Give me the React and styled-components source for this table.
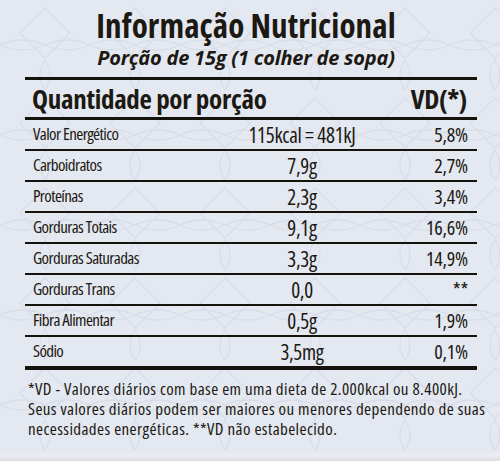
import React from "react"
import styled, { createGlobalStyle } from "styled-components"

const GlobalStyle = createGlobalStyle`
	html, body {
		margin: 0;
		padding: 0;
	}
	body {
		font-family: "Open Sans", "DejaVu Sans Condensed", sans-serif;
		font-stretch: 75%;
		color: #1c1812;
	}
`

const pattern = encodeURIComponent(
	`<svg xmlns='http://www.w3.org/2000/svg' width='90' height='90' viewBox='0 0 90 90'><g fill='none' stroke='#d9dde7' stroke-width='1.3'><path d='M45 8 L70 33 L45 58 L20 33 Z'/><path d='M0 45 Q22 35 45 45 Q22 55 0 45 Z'/><path d='M45 45 Q67 35 90 45 Q67 55 45 45 Z'/><path d='M45 60 Q35 75 45 90 Q55 75 45 60 Z'/></g></svg>`
)

const Page = styled.div`
	width: 500px;
	height: 461px;
	overflow: hidden;
	background-color: #e4e8f1;
	background-image: linear-gradient(to bottom, transparent 452px, #eceef2 455px, #dcdde2 461px),
		url("data:image/svg+xml,${pattern}");
	box-sizing: border-box;
	padding: 8px 23px 0 25px;
`

const Header = styled.header`
	text-align: center;
	padding-right: 10px;
`

const Title = styled.h1`
	margin: 0;
	font-size: 33px;
	font-weight: 700;
	line-height: 36px;
	letter-spacing: 0.1px;
`

const SubTitle = styled.h2`
	margin: 0;
	font-size: 20px;
	font-stretch: 93%;
	font-style: italic;
	font-weight: 700;
	line-height: 28px;
	letter-spacing: -0.2px;
`

const Table = styled.div`
	margin-top: 5px;
	border-top: 3px solid #16120c;
	border-bottom: 4px solid #16120c;
`

const HeadRow = styled.div`
	display: flex;
	justify-content: space-between;
	align-items: center;
	height: 37px;
	padding: 0 10px 0 7px;
	border-bottom: 3px solid #16120c;
	font-size: 27px;
	font-weight: 700;
	letter-spacing: -0.3px;
`

const Row = styled.div`
	display: grid;
	grid-template-columns: 204px 130px 1fr;
	align-items: center;
	height: 29px;
	padding: 0 9px 0 8px;
	white-space: nowrap;
	&:not(:last-child) {
		border-bottom: 2px solid #16120c;
	}
`

const Name = styled.span`
	font-size: 17px;
	letter-spacing: -0.6px;
	margin-top: -3px;
`

const Amount = styled.span`
	text-align: center;
	font-size: 21px;
	letter-spacing: -0.3px;
`

const Daily = styled.span`
	text-align: right;
	font-size: 20px;
	letter-spacing: -0.2px;
`

const Footnote = styled.p`
	margin: 9px 0 0 3px;
	font-size: 17px;
	line-height: 20px;
	letter-spacing: 0.4px;
	white-space: nowrap;
`

const nutrients = [
	{ name: "Valor Energético", amount: "115kcal = 481kJ", daily: "5,8%" },
	{ name: "Carboidratos", amount: "7,9g", daily: "2,7%" },
	{ name: "Proteínas", amount: "2,3g", daily: "3,4%" },
	{ name: "Gorduras Totais", amount: "9,1g", daily: "16,6%" },
	{ name: "Gorduras Saturadas", amount: "3,3g", daily: "14,9%" },
	{ name: "Gorduras Trans", amount: "0,0", daily: "**" },
	{ name: "Fibra Alimentar", amount: "0,5g", daily: "1,9%" },
	{ name: "Sódio", amount: "3,5mg", daily: "0,1%" },
]

const App = () => {
	return (
		<React.Fragment>
			<GlobalStyle />
			<Page>
				<Header>
					<Title>Informação Nutricional</Title>
					<SubTitle>Porção de 15g (1 colher de sopa)</SubTitle>
				</Header>
				<Table>
					<HeadRow>
						<span>Quantidade por porção</span>
						<span>VD(*)</span>
					</HeadRow>
					{nutrients.map((item) => (
						<Row key={item.name}>
							<Name>{item.name}</Name>
							<Amount>{item.amount}</Amount>
							<Daily>{item.daily}</Daily>
						</Row>
					))}
				</Table>
				<Footnote>
					*VD - Valores diários com base em uma dieta de 2.000kcal ou 8.400kJ.
					<br />
					Seus valores diários podem ser maiores ou menores dependendo de suas
					<br />
					necessidades energéticas. **VD não estabelecido.
				</Footnote>
			</Page>
		</React.Fragment>
	)
}

export default App
